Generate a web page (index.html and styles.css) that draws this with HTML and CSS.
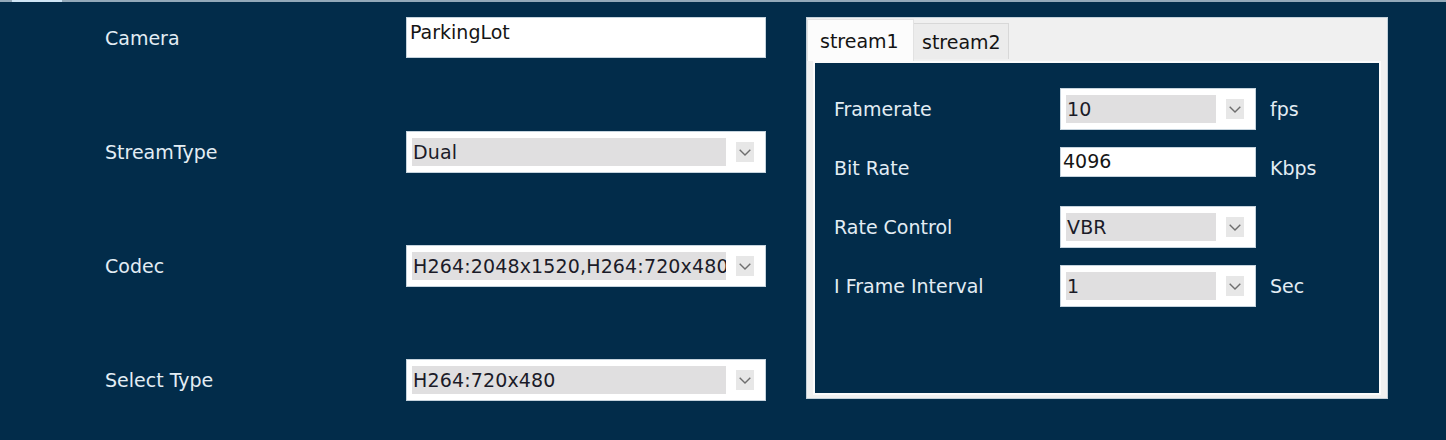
FILE: index.html
```html
<!DOCTYPE html>
<html>
<head>
<meta charset="utf-8">
<link rel="stylesheet" href="styles.css">
</head>
<body>
<div class="topline"><span class="glow"></span></div>
<main class="page">
  <section class="form">
    <div class="label">Camera</div>
    <div class="textbox tall">ParkingLot</div>

    <div class="label">StreamType</div>
    <div class="combo"><span class="value">Dual</span><span class="arrow"><svg width="12" height="7" viewBox="0 0 12 7"><polyline points="0.7,0.7 6,6 11.3,0.7" fill="none" stroke="#6e6e6e" stroke-width="1.4"/></svg></span></div>

    <div class="label">Codec</div>
    <div class="combo"><span class="value">H264:2048x1520,H264:720x480</span><span class="arrow"><svg width="12" height="7" viewBox="0 0 12 7"><polyline points="0.7,0.7 6,6 11.3,0.7" fill="none" stroke="#6e6e6e" stroke-width="1.4"/></svg></span></div>

    <div class="label">Select Type</div>
    <div class="combo"><span class="value">H264:720x480</span><span class="arrow"><svg width="12" height="7" viewBox="0 0 12 7"><polyline points="0.7,0.7 6,6 11.3,0.7" fill="none" stroke="#6e6e6e" stroke-width="1.4"/></svg></span></div>
  </section>

  <section class="group">
    <div class="tabs">
      <div class="tab active">stream1</div>
      <div class="tab">stream2</div>
    </div>
    <div class="panel">
      <div class="subgrid">
        <div class="label">Framerate</div>
        <div class="combo small"><span class="value">10</span><span class="arrow"><svg width="12" height="7" viewBox="0 0 12 7"><polyline points="0.7,0.7 6,6 11.3,0.7" fill="none" stroke="#6e6e6e" stroke-width="1.4"/></svg></span></div>
        <div class="label unit">fps</div>

        <div class="label">Bit Rate</div>
        <div class="textbox short">4096</div>
        <div class="label unit">Kbps</div>

        <div class="label">Rate Control</div>
        <div class="combo small"><span class="value">VBR</span><span class="arrow"><svg width="12" height="7" viewBox="0 0 12 7"><polyline points="0.7,0.7 6,6 11.3,0.7" fill="none" stroke="#6e6e6e" stroke-width="1.4"/></svg></span></div>
        <div class="label unit"></div>

        <div class="label">I Frame Interval</div>
        <div class="combo small"><span class="value">1</span><span class="arrow"><svg width="12" height="7" viewBox="0 0 12 7"><polyline points="0.7,0.7 6,6 11.3,0.7" fill="none" stroke="#6e6e6e" stroke-width="1.4"/></svg></span></div>
        <div class="label unit">Sec</div>
      </div>
    </div>
  </section>
</main>
</body>
</html>
```

FILE: styles.css
```css
* {
  box-sizing: border-box;
}

body {
  margin: 0;
  width: 1446px;
  height: 440px;
  overflow: hidden;
  background: #022c4a;
  font-family: "DejaVu Sans", "Noto Sans", sans-serif;
  font-size: 19px;
}

.topline {
  height: 2px;
  background: #93a9b9;
  display: flex;
}

.glow {
  width: 50px;
  height: 2px;
  margin-left: 12px;
  background: #cfe6f6;
}

.page {
  display: flex;
  align-items: flex-start;
  padding: 15px 0 0 105px;
}

.form {
  display: grid;
  grid-template-columns: 301px 360px;
  grid-auto-rows: 42px;
  row-gap: 72px;
  align-items: center;
}

.label {
  color: #e3edf4;
  line-height: 22px;
  white-space: nowrap;
}

.textbox {
  background: #fff;
  border: 1px solid #c5d3dd;
  color: #151515;
  line-height: 22px;
  padding: 3px 3px;
  align-self: start;
  white-space: nowrap;
}

.textbox.tall {
  height: 41px;
}

.textbox.short {
  height: 30px;
  padding: 2px 2px;
}

.combo {
  height: 42px;
  background: #fff;
  border: 1px solid #c5d3dd;
  display: flex;
  align-items: center;
  padding: 0 11px 0 5px;
}

.value {
  flex: none;
  width: 314px;
  height: 28px;
  line-height: 28px;
  padding-left: 1px;
  background: #e0dfe0;
  color: #1b1b28;
  white-space: nowrap;
  overflow: hidden;
  letter-spacing: 0.15px;
}

.combo.small .value {
  width: 150px;
}

.arrow {
  flex: none;
  margin-left: 10px;
  width: 18px;
  height: 20px;
  background: #e7e7e7;
  display: flex;
  align-items: center;
  justify-content: center;
  padding-top: 1px;
}

.group {
  margin-left: 40px;
  width: 582px;
  height: 382px;
  background: #f0f0f0;
  border: 1px solid #c3d0d9;
  display: flex;
  flex-direction: column;
}

.tabs {
  display: flex;
  align-items: flex-start;
  height: 43px;
  flex: none;
}

.tab {
  display: flex;
  align-items: center;
  color: #141414;
  white-space: nowrap;
}

.tab.active {
  margin-top: 1px;
  width: 107px;
  height: 42px;
  padding-left: 12px;
  background: #fcfcfc;
  border: 1px solid #e2e2e2;
  border-bottom: none;
}

.tab:not(.active) {
  margin-top: 5px;
  width: 95px;
  height: 36px;
  padding-left: 8px;
  background: #ececec;
  border: 1px solid #d8d8d8;
  border-left: none;
  border-bottom: none;
}

.panel {
  flex: 1;
  margin: 0 6px 3px 6px;
  border: 2px solid #fbfbfb;
  background: #022c4a;
  padding: 25px 0 0 19px;
}

.subgrid {
  display: grid;
  grid-template-columns: 212px 196px auto;
  grid-auto-rows: 42px;
  row-gap: 17px;
  column-gap: 14px;
  align-items: center;
}
```
